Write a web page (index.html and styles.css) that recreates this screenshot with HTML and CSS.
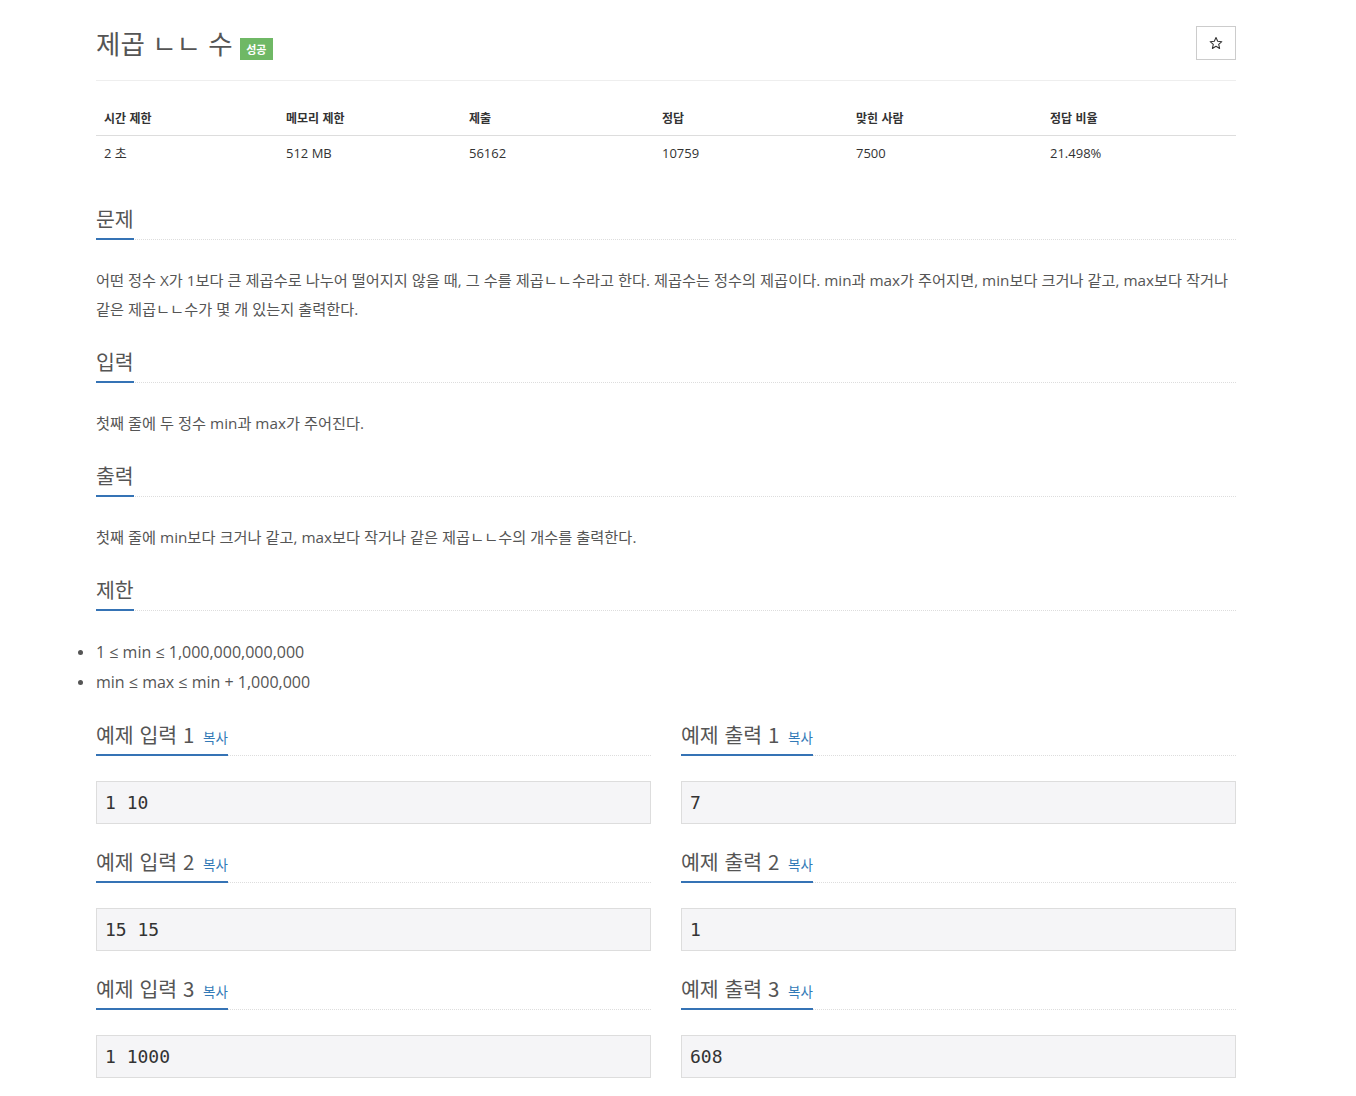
FILE: index.html
```html
<!DOCTYPE html>
<html lang="ko">
<head>
<meta charset="utf-8">
<title>제곱 ㄴㄴ 수</title>
<link rel="stylesheet" href="styles.css">
</head>
<body>
<div class="container">
  <div class="page-header">
    <h1 class="title">제곱 ㄴㄴ 수<span class="badge">성공</span></h1>
    <button class="star-btn" type="button" aria-label="즐겨찾기">
      <svg width="14" height="14" viewBox="0 0 24 24" aria-hidden="true"><path d="M12 2.5l2.9 6.6 7.1.6-5.4 4.7 1.6 7-6.2-3.7-6.2 3.7 1.6-7L2 9.7l7.1-.6z" fill="none" stroke="#333" stroke-width="1.8" stroke-linejoin="round"/></svg>
    </button>
  </div>

  <table class="info">
    <thead>
      <tr>
        <th>시간 제한</th><th>메모리 제한</th><th>제출</th><th>정답</th><th>맞힌 사람</th><th>정답 비율</th>
      </tr>
    </thead>
    <tbody>
      <tr>
        <td>2 초</td><td>512 MB</td><td>56162</td><td>10759</td><td>7500</td><td>21.498%</td>
      </tr>
    </tbody>
  </table>

  <section class="section first">
    <div class="headline"><h2>문제</h2></div>
    <div class="body">
      <p>어떤 정수 X가 1보다 큰 제곱수로 나누어 떨어지지 않을 때, 그 수를 제곱ㄴㄴ수라고 한다. 제곱수는 정수의 제곱이다. min과 max가 주어지면, min보다 크거나 같고, max보다 작거나 같은 제곱ㄴㄴ수가 몇 개 있는지 출력한다.</p>
    </div>
  </section>

  <section class="section">
    <div class="headline"><h2>입력</h2></div>
    <div class="body">
      <p>첫째 줄에 두 정수 min과 max가 주어진다.</p>
    </div>
  </section>

  <section class="section">
    <div class="headline"><h2>출력</h2></div>
    <div class="body">
      <p>첫째 줄에 min보다 크거나 같고, max보다 작거나 같은 제곱ㄴㄴ수의 개수를 출력한다.</p>
    </div>
  </section>

  <section class="section">
    <div class="headline"><h2>제한</h2></div>
    <div class="body">
      <ul class="limits">
        <li>1 ≤ min ≤ 1,000,000,000,000</li>
        <li>min ≤ max ≤ min + 1,000,000</li>
      </ul>
    </div>
  </section>

  <div class="samples">
    <section class="section sample">
      <div class="headline"><h2>예제 입력 1 <a class="copy">복사</a></h2></div>
      <div class="body"><pre class="sampledata">1 10</pre></div>
    </section>
    <section class="section sample">
      <div class="headline"><h2>예제 출력 1 <a class="copy">복사</a></h2></div>
      <div class="body"><pre class="sampledata">7</pre></div>
    </section>
    <section class="section sample">
      <div class="headline"><h2>예제 입력 2 <a class="copy">복사</a></h2></div>
      <div class="body"><pre class="sampledata">15 15</pre></div>
    </section>
    <section class="section sample">
      <div class="headline"><h2>예제 출력 2 <a class="copy">복사</a></h2></div>
      <div class="body"><pre class="sampledata">1</pre></div>
    </section>
    <section class="section sample">
      <div class="headline"><h2>예제 입력 3 <a class="copy">복사</a></h2></div>
      <div class="body"><pre class="sampledata">1 1000</pre></div>
    </section>
    <section class="section sample">
      <div class="headline"><h2>예제 출력 3 <a class="copy">복사</a></h2></div>
      <div class="body"><pre class="sampledata">608</pre></div>
    </section>
  </div>
</div>
</body>
</html>
```

FILE: styles.css
```css
html, body {
  margin: 0;
  padding: 0;
  background: #fff;
}

body {
  font-family: "Open Sans", "Noto Sans CJK KR", sans-serif;
  color: #555;
}

.container {
  width: 1140px;
  margin-left: 96px;
}

.page-header {
  display: flex;
  justify-content: space-between;
  align-items: center;
  padding-top: 26px;
  padding-bottom: 20px;
  border-bottom: 1px solid #eee;
}

.title {
  margin: 0;
  font-family: "Noto Sans CJK KR", sans-serif;
  font-weight: 400;
  font-size: 26.5px;
  line-height: 34px;
  color: #555;
  display: flex;
  align-items: center;
}

.badge {
  display: inline-block;
  margin-left: 7px;
  margin-top: 12px;
  width: 33px;
  height: 22px;
  line-height: 22px;
  text-align: center;
  background: #6fb865;
  color: #fff;
  font-size: 11px;
  font-weight: 700;
}

.star-btn {
  width: 40px;
  height: 34px;
  border: 1px solid #ccc;
  background: #fff;
  padding: 0;
  display: flex;
  align-items: center;
  justify-content: center;
}

.info {
  width: 100%;
  margin-top: 21px;
  border-collapse: collapse;
  font-family: "Open Sans", "Noto Sans CJK KR", sans-serif;
  color: #333;
}

.info th,
.info td {
  text-align: left;
  line-height: 17px;
}

.info th {
  font-family: "Noto Sans CJK KR", sans-serif;
  font-size: 12px;
  font-weight: 700;
  border-bottom: 1px solid #ddd;
  padding: 7px 8px 9px;
}

.info td {
  font-size: 13px;
  padding: 9px 8px 7px;
}

.info th:nth-child(1) { width: 166px; }
.info th:nth-child(2) { width: 167px; }
.info th:nth-child(3) { width: 177px; }
.info th:nth-child(4) { width: 178px; }
.info th:nth-child(5) { width: 178px; }

.section {
  margin-top: 26px;
}

.section.first {
  margin-top: 38px;
}

.headline {
  display: flex;
  border-bottom: 1px dotted #ddd;
}

.headline h2 {
  margin: 0 0 -1px;
  padding-bottom: 9px;
  font-family: "Noto Sans CJK KR", sans-serif;
  font-weight: 400;
  font-size: 20.5px;
  line-height: 22px;
  color: #555;
  border-bottom: 2px solid #3573b5;
}

.copy {
  font-size: 13.5px;
  line-height: 1;
  color: #337ab7;
  margin-left: 3px;
}

.body {
  padding-top: 26px;
  font-size: 15.25px;
}

.body p {
  margin: 0;
  line-height: 29px;
}

.limits {
  margin: 0;
  padding-left: 0;
  list-style: none;
  font-size: 16px;
}

.limits li {
  line-height: 30px;
  position: relative;
}

.limits li::before {
  content: "";
  position: absolute;
  left: -18px;
  top: 13px;
  width: 5px;
  height: 5px;
  border-radius: 50%;
  background: #555;
}

.samples {
  display: grid;
  grid-template-columns: 555px 555px;
  column-gap: 30px;
}

.sample .body {
  padding-top: 25px;
}

.sampledata {
  margin: 0;
  padding: 9px 8px;
  border: 1px solid #ddd;
  background: #f5f5f7;
  font-family: "DejaVu Sans Mono", monospace;
  font-size: 18px;
  line-height: 23px;
  color: #333;
}
```
